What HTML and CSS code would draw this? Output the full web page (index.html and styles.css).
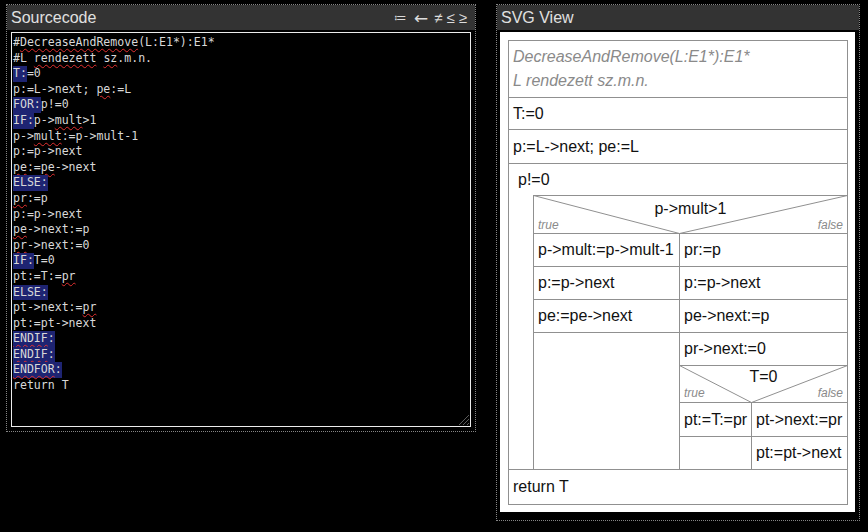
FILE: index.html
```html
<!DOCTYPE html>
<html>
<head>
<meta charset="utf-8">
<link rel="stylesheet" href="styles.css">
</head>
<body>
<div class="panel src">
  <div class="panel-head">
    <span class="title">Sourcecode</span>
    <span class="tools"><span class="t-def">≔</span><span class="t-arrow">←</span><span>≠</span><span>≤</span><span>≥</span></span>
  </div>
  <div class="editor">
<div class="code"><div class="ln">#<span class="sp">DecreaseAndRemove</span>(L:E1*):E1*</div><div class="ln">#L <span class="sp">rendezett</span> <span class="sp">sz</span>.m.n.</div><div class="ln"><span class="kw">T:</span>=0</div><div class="ln">p:=L-&gt;next; <span class="sp">pe</span>:=L</div><div class="ln"><span class="kw">FOR:</span>p!=0</div><div class="ln"><span class="kw">IF:</span>p-&gt;<span class="sp">mult</span>&gt;1</div><div class="ln">p-&gt;<span class="sp">mult</span>:=p-&gt;mult-1</div><div class="ln">p:=p-&gt;next</div><div class="ln"><span class="sp">pe</span>:=<span class="sp">pe</span>-&gt;next</div><div class="ln"><span class="kw">ELSE:</span></div><div class="ln"><span class="sp">pr</span>:=p</div><div class="ln">p:=p-&gt;next</div><div class="ln"><span class="sp">pe</span>-&gt;next:=p</div><div class="ln"><span class="sp">pr</span>-&gt;next:=0</div><div class="ln"><span class="kw">IF:</span>T=0</div><div class="ln">pt:=T:=<span class="sp">pr</span></div><div class="ln"><span class="kw">ELSE:</span></div><div class="ln">pt-&gt;next:=<span class="sp">pr</span></div><div class="ln">pt:=pt-&gt;next</div><div class="ln"><span class="kw"><span class="sp">ENDIF</span>:</span></div><div class="ln"><span class="kw"><span class="sp">ENDIF</span>:</span></div><div class="ln"><span class="kw"><span class="sp">ENDFOR</span>:</span></div><div class="ln">return T</div></div>
    <svg class="grip" width="14" height="14" viewBox="0 0 14 14"><path d="M13 3 L3 13 M13 7 L7 13 M13 11 L11 13" stroke="#5a5a5a" stroke-width="1" fill="none"/></svg>
  </div>
</div>
<div class="panel view">
  <div class="panel-head"><span class="title">SVG View</span></div>
  <div class="canvas">
    <div class="nsd">
      <div class="nsd-head">
        <div>DecreaseAndRemove(L:E1*):E1*</div>
        <div>L rendezett sz.m.n.</div>
      </div>
      <div class="st r32">T:=0</div>
      <div class="st r34">p:=L-&gt;next; pe:=L</div>
      <div class="loop">
        <div class="loop-label">p!=0</div>
        <div class="loop-body">
          <div class="if-head">
            <svg class="diag diag1" width="315" height="39" viewBox="0 0 315 39"><polyline points="0.5,0.5 146.5,38.5 314.5,0.5" fill="none" stroke="#909090" stroke-width="1"/></svg>
            <div class="cond">p-&gt;mult&gt;1</div>
            <div class="tf"><span>true</span><span>false</span></div>
          </div>
          <div class="cols">
            <div class="col-l">
              <div class="st r33">p-&gt;mult:=p-&gt;mult-1</div>
              <div class="st r33">p:=p-&gt;next</div>
              <div class="st r33">pe:=pe-&gt;next</div>
            </div>
            <div class="col-r">
              <div class="st r33">pr:=p</div>
              <div class="st r33">p:=p-&gt;next</div>
              <div class="st r33">pe-&gt;next:=p</div>
              <div class="st r33">pr-&gt;next:=0</div>
              <div class="if-head small">
                <svg class="diag diag2" width="169" height="38" viewBox="0 0 169 38"><polyline points="0.5,0.5 72.5,37.5 168.5,0.5" fill="none" stroke="#909090" stroke-width="1"/></svg>
                <div class="cond">T=0</div>
                <div class="tf"><span>true</span><span>false</span></div>
              </div>
              <div class="cols">
                <div class="col2-l">
                  <div class="st r34">pt:=T:=pr</div>
                </div>
                <div class="col2-r">
                  <div class="st r34">pt-&gt;next:=pr</div>
                  <div class="st last">pt:=pt-&gt;next</div>
                </div>
              </div>
            </div>
          </div>
        </div>
      </div>
      <div class="st last ret">return T</div>
    </div>
  </div>
</div>
</body>
</html>
```

FILE: styles.css
```css
html, body {
  margin: 0;
  background: #000;
}
body {
  display: flex;
  align-items: flex-start;
  gap: 20px;
  padding: 4px 0 0 6px;
  font-family: "Liberation Sans", Arial, sans-serif;
}
.panel {
  border: 1px dotted #858585;
  box-sizing: border-box;
  background: #000;
}
.src { width: 470px; height: 428px; }
.view { width: 364px; height: 517px; }

.panel-head {
  height: 25px;
  background: #333;
  color: #e0e0e0;
  font-size: 16px;
  display: flex;
  align-items: center;
  justify-content: space-between;
  padding: 0 8px 0 4px;
}
.tools {
  display: flex;
  align-items: center;
  gap: 4px;
  font-family: "Liberation Sans", "DejaVu Sans", sans-serif;
  font-size: 15px;
  color: #dcdcdc;
}
.t-def {
  font-family: "DejaVu Sans", sans-serif;
  font-size: 13px;
  margin-right: 3px;
}
.t-arrow {
  font-family: "DejaVu Sans", sans-serif;
  font-size: 17px;
  margin-right: 2px;
}

.editor {
  margin: 2px 4px 4px 4px;
  height: 395px;
  border: 1px solid #ececec;
  box-sizing: border-box;
  position: relative;
}
.code {
  padding: 2px 0 0 1px;
  font-family: "DejaVu Sans Mono", monospace;
  font-size: 11.55px;
  line-height: 15.6px;
  color: #d8d8d8;
  white-space: pre;
}
.ln { height: 15.6px; }
.kw {
  display: inline-block;
  background: #1e2472;
  line-height: 15.6px;
}
.sp {
  text-decoration: underline wavy #e23030;
  text-decoration-thickness: 1px;
  text-underline-offset: 2px;
}
.grip {
  position: absolute;
  right: 0;
  bottom: 0;
}

.canvas {
  margin: 2px 4px 8px 3px;
  height: 480px;
  background: #fff;
  padding: 8px 0 0 8px;
  box-sizing: border-box;
}
.nsd {
  width: 340px;
  height: 465px;
  border: 1px solid #909090;
  box-sizing: border-box;
  display: flex;
  flex-direction: column;
  font-size: 16px;
  color: #111;
}
.nsd-head {
  height: 57px;
  box-sizing: border-box;
  border-bottom: 1px solid #909090;
  display: flex;
  flex-direction: column;
  justify-content: center;
  padding-left: 4px;
  line-height: 24px;
  font-style: italic;
  color: #8a8a8a;
}
.st {
  display: flex;
  align-items: center;
  padding-left: 4px;
  border-bottom: 1px solid #909090;
  box-sizing: border-box;
  white-space: nowrap;
}
.st.last { border-bottom: none; }
.r32 { height: 32px; }
.r33 { height: 33px; }
.r34 { height: 34px; }
.st.last { height: 32px; }
.st.ret { height: 34px; }

.loop {
  height: 306px;
  border-bottom: 1px solid #909090;
  box-sizing: border-box;
  display: flex;
  flex-direction: column;
}
.loop-label {
  height: 31px;
  padding-left: 9px;
  display: flex;
  align-items: center;
}
.loop-body {
  flex: 1;
  margin-left: 24px;
  border-top: 1px solid #909090;
  border-left: 1px solid #909090;
  display: flex;
  flex-direction: column;
}
.if-head {
  height: 38px;
  box-sizing: border-box;
  border-bottom: 1px solid #909090;
  position: relative;
  display: flex;
  flex-direction: column;
}
.if-head.small { height: 37px; }
.diag {
  position: absolute;
  left: -1px;
  top: -1px;
}
.cond {
  position: relative;
  text-align: center;
  padding-top: 4px;
  line-height: 18px;
}
.small .cond { padding-top: 2px; }
.tf {
  position: relative;
  margin-top: auto;
  display: flex;
  justify-content: space-between;
  padding: 0 4px 2px 4px;
  font-size: 12px;
  line-height: 14px;
  font-style: italic;
  color: #8a8a8a;
}
.cols {
  flex: 1;
  display: flex;
}
.col-l {
  width: 146px;
  border-right: 1px solid #909090;
  box-sizing: border-box;
}
.col-r {
  flex: 1;
  display: flex;
  flex-direction: column;
}
.col2-l {
  width: 72px;
  border-right: 1px solid #909090;
  box-sizing: border-box;
}
.col2-r {
  flex: 1;
  display: flex;
  flex-direction: column;
}
```
